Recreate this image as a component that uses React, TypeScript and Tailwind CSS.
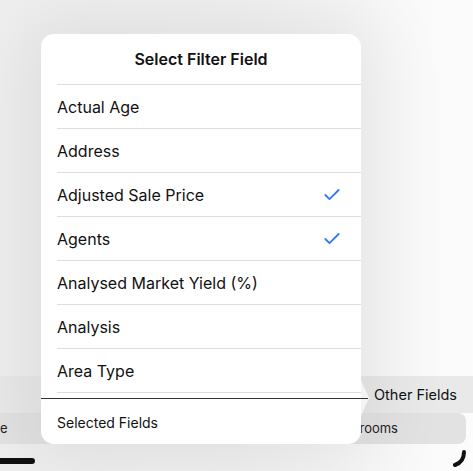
import { Check } from 'lucide-react'

const fields = [
  { name: 'Actual Age', selected: false },
  { name: 'Address', selected: false },
  { name: 'Adjusted Sale Price', selected: true },
  { name: 'Agents', selected: true },
  { name: 'Analysed Market Yield (%)', selected: false },
  { name: 'Analysis', selected: false },
  { name: 'Area Type', selected: false },
]

function FieldRow({ name, selected }: { name: string; selected: boolean }) {
  return (
    <div className="flex h-[44px] items-center justify-between border-b border-[#dedede] pr-[19px]">
      <span className="text-[16px] text-[#111]">{name}</span>
      {selected && <Check className="h-[20px] w-[20px] text-[#3478f6]" strokeWidth={2.2} />}
    </div>
  )
}

export default function App() {
  return (
    <div
      className="relative h-[471px] w-[473px] overflow-hidden bg-gradient-to-r from-[#efefef] via-[#f1f1f1] to-[#fcfcfc]"
      style={{ fontFamily: 'Inter, "Noto Sans", sans-serif' }}
    >
      {/* page behind the popover */}
      <div className="flex h-full flex-col pt-[376px]">
        <div className="flex h-[37px] items-center justify-end bg-[#e9e9e9] pr-[16px]">
          <span className="text-[14.5px] text-[#111]">Other Fields</span>
        </div>
        <div className="mr-[7px] flex h-[31px] items-center justify-between rounded-r-[8px] bg-[#e2e2e2] pr-[68px]">
          <span className="text-[13px] text-[#222]">e</span>
          <span className="text-[13px] text-[#222]">rooms</span>
        </div>
        <div className="flex flex-1 items-center justify-between pr-[6px]">
          <div className="mt-[6px] h-[6px] w-[35px] rounded-r-full bg-[#111]" />
          <svg width="14" height="18" viewBox="0 0 14 18" className="mt-[2px]">
            <path d="M11 2 C11 9 8 13 2 15" stroke="#111" strokeWidth="4" fill="none" strokeLinecap="round" />
          </svg>
        </div>
      </div>

      {/* popover arrow */}
      <svg width="10" height="36" viewBox="0 0 10 36" className="absolute top-[380px] left-[359px]">
        <path d="M0 0 L2 0 L10 18 L2 36 L0 36 Z" fill="#fff" />
      </svg>

      {/* popover */}
      <div className="absolute top-[34px] left-[41px] w-[320px] rounded-[13px] bg-white shadow-[0_0_70px_20px_rgba(0,0,0,0.07)]">
        <div className="flex h-[50px] items-center justify-center">
          <span className="text-[16px] font-semibold text-[#111]">Select Filter Field</span>
        </div>
        <div className="pl-[16px]">
          <div className="border-t border-[#dedede]" />
          {fields.map(f => (
            <FieldRow key={f.name} name={f.name} selected={f.selected} />
          ))}
          <div className="flex h-[51px] items-center pt-[7px]">
            <span className="text-[14px] text-[#111]">Selected Fields</span>
          </div>
        </div>
      </div>

      {/* selection underline */}
      <div className="absolute top-[398px] left-[41px] h-px w-[327px] bg-[#333]" />
    </div>
  )
}
